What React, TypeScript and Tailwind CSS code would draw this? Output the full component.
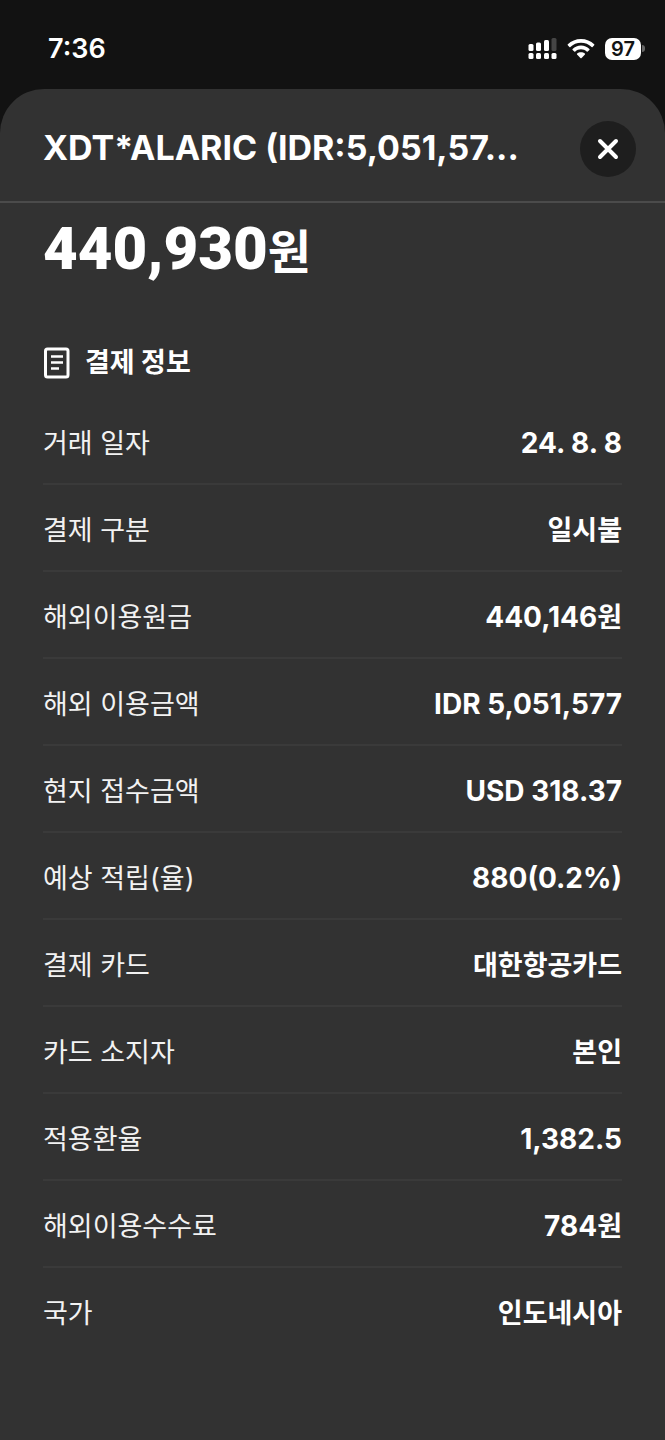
import React from "react";

const details = [
  { label: "거래 일자", value: "24. 8. 8" },
  { label: "결제 구분", text: "일시불" },
  { label: "해외이용원금", value: "440,146", text: "원" },
  { label: "해외 이용금액", value: "IDR 5,051,577" },
  { label: "현지 접수금액", value: "USD 318.37" },
  { label: "예상 적립(율)", value: "880(0.2%)" },
  { label: "결제 카드", text: "대한항공카드" },
  { label: "카드 소지자", text: "본인" },
  { label: "적용환율", value: "1,382.5" },
  { label: "해외이용수수료", value: "784", text: "원" },
  { label: "국가", text: "인도네시아" },
];

function SignalIcon() {
  return (
    <svg width="29" height="22" viewBox="0 0 29 22" fill="white" aria-hidden="true">
      <rect x="0.5" y="6" width="5" height="7" rx="1.5" />
      <rect x="8" y="4.5" width="5" height="8.5" rx="1.5" />
      <rect x="16" y="2" width="5" height="11" rx="1.5" />
      <rect x="23.5" y="0" width="5" height="13" rx="1.5" fill="#454545" />
      <rect x="0.5" y="15" width="5" height="6" rx="1.5" />
      <rect x="8" y="15" width="5" height="6" rx="1.5" />
      <rect x="16" y="15" width="5" height="6" rx="1.5" />
      <rect x="23.5" y="15" width="5" height="6" rx="1.5" />
    </svg>
  );
}

function WifiIcon() {
  return (
    <svg width="28" height="22" viewBox="0 0 28 22" fill="white" aria-hidden="true">
      <path d="M14 1C8.9 1 4.2 3 .8 6.3c-.3.3-.3.7 0 1l1.6 1.6c.3.3.7.3 1 0C6.2 6.2 9.9 4.7 14 4.7s7.8 1.5 10.6 4.2c.3.3.7.3 1 0l1.6-1.6c.3-.3.3-.7 0-1C23.8 3 19.1 1 14 1z" />
      <path d="M14 7.6c-3.2 0-6.2 1.3-8.4 3.3-.3.3-.3.7 0 1l1.7 1.6c.3.3.7.3 1 0 1.5-1.4 3.5-2.2 5.7-2.2s4.2.8 5.7 2.2c.3.3.7.3 1 0l1.7-1.6c.3-.3.3-.7 0-1-2.2-2-5.2-3.3-8.4-3.3z" />
      <path d="M14 14.2c-1.5 0-2.8.5-3.9 1.3-.3.3-.3.8 0 1.1l3.3 3.3c.3.3.9.3 1.2 0l3.3-3.3c.3-.3.3-.8 0-1.1-1.1-.8-2.4-1.3-3.9-1.3z" />
    </svg>
  );
}

function StatusBar() {
  return (
    <div className="flex h-[89px] items-center justify-between pt-2 pr-5 pl-12">
      <span className="text-[27px] leading-8 font-semibold">7:36</span>
      <div className="flex items-center gap-[10px]">
        <SignalIcon />
        <WifiIcon />
        <div className="flex items-center gap-px">
          <span className="flex h-[22px] w-9 items-center justify-center rounded-[7px] bg-white text-[20px] leading-5 font-semibold text-[#141414]">
            97
          </span>
          <span className="h-[7px] w-[3px] rounded-r-full bg-[#666666]" />
        </div>
      </div>
    </div>
  );
}

export default function App() {
  return (
    <div className="flex min-h-screen flex-col bg-[#121212] font-['Inter','Noto_Sans_CJK_KR',sans-serif] text-white">
      <StatusBar />
      <main className="flex-1 rounded-t-[44px] bg-[#323232]">
        <header className="flex h-[114px] items-center justify-between border-b-2 border-[#4b4b4b] pt-2 pr-[29px] pl-[43px]">
          <h1 className="pb-0.5 text-[34px] leading-10 font-bold">XDT*ALARIC (IDR:5,051,57...</h1>
          <button
            type="button"
            aria-label="닫기"
            className="flex size-14 shrink-0 items-center justify-center rounded-full bg-[#1e1e1e]"
          >
            <svg width="22" height="22" viewBox="0 0 22 22" stroke="white" strokeWidth="4" strokeLinecap="round">
              <path d="M3 3l16 16M19 3L3 19" />
            </svg>
          </button>
        </header>

        <div className="px-[43px] pt-[10px] pb-20">
          <p className="flex items-baseline leading-[72px]">
            <span className="font-['Roboto',sans-serif] text-[60px] font-black">440,930</span>
            <span className="text-[47px] font-bold">원</span>
          </p>

          <h2 className="mt-[55px] flex h-10 items-center gap-[15px] text-[27px] leading-10 font-bold">
            <svg width="27" height="32" viewBox="0 0 27 32" fill="none" stroke="white" aria-hidden="true">
              <rect x="2.5" y="2" width="22.5" height="28" rx="2" strokeWidth="3" />
              <path d="M8 9.5h12M8 15.5h12M8 21.5h8" strokeWidth="2.5" />
            </svg>
            결제 정보
          </h2>

          <dl className="mt-[15px] text-[27px] leading-10">
            {details.map((item) => (
              <div
                key={item.label}
                className="flex h-[87px] items-center justify-between border-b-2 border-[#3a3a3a] pt-1.5 last:border-transparent"
              >
                <dt className="text-[#f2f2f2]">{item.label}</dt>
                <dd className="font-bold">
                  {item.value && <span className="text-[28px]">{item.value}</span>}
                  {item.text}
                </dd>
              </div>
            ))}
          </dl>
        </div>
      </main>
    </div>
  );
}
